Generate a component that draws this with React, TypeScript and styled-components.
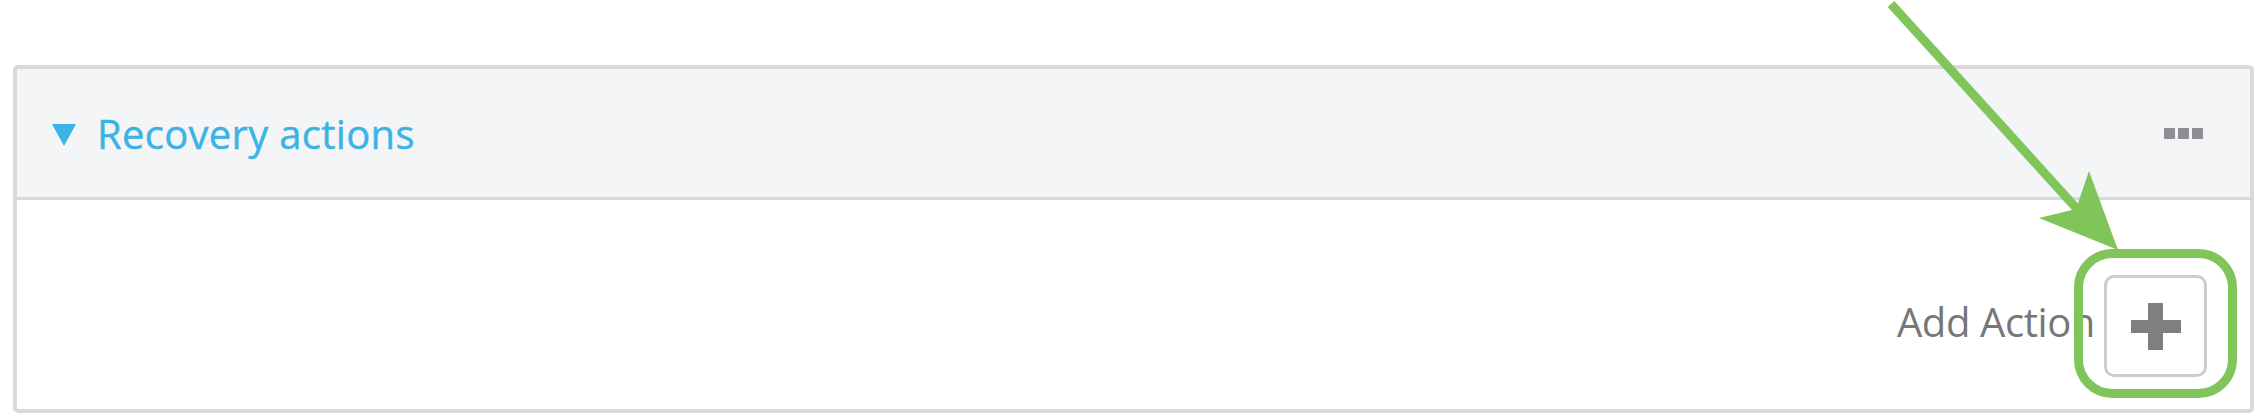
import styled, { createGlobalStyle } from "styled-components";

const GlobalStyle = createGlobalStyle`
  html, body {
    margin: 0;
    padding: 0;
    background: #ffffff;
  }
  body {
    font-family: "Open Sans", "Liberation Sans", sans-serif;
  }
`;

const Page = styled.div`
  position: relative;
  width: 2264px;
  height: 419px;
  padding: 65px 10px 0 13px;
  box-sizing: border-box;
  overflow: hidden;
`;

const Panel = styled.section`
  border: 4px solid #d9d9d9;
  border-radius: 5px;
  background: #ffffff;
  display: flex;
  flex-direction: column;
  height: 348px;
  box-sizing: border-box;
`;

const Header = styled.div`
  height: 128px;
  display: flex;
  align-items: center;
  padding: 0 47px 0 35px;
  background: #f4f5f7;
  border-bottom: 3px solid #d9d9d9;
`;

const Toggle = styled.svg`
  width: 24px;
  height: 22px;
  margin-right: 21px;
  margin-top: 4px;
  fill: #3bb3e6;
`;

const Title = styled.h2`
  margin: 0;
  font-size: 40px;
  font-weight: 500;
  color: #3bb3e6;
  letter-spacing: 0.3px;
  -webkit-text-stroke: 0.4px #3bb3e6;
`;

const MoreDots = styled.div`
  margin-left: auto;
  display: flex;
  gap: 3px;
  span {
    width: 11px;
    height: 11px;
    border-radius: 1px;
    background: #8e8e92;
  }
`;

const Body = styled.div`
  flex: 1;
  display: flex;
  justify-content: flex-end;
  align-items: flex-start;
  padding: 75px 43px 0 0;
`;

const ActionRow = styled.div`
  display: flex;
  align-items: center;
  gap: 9px;
`;

const ActionLabel = styled.span`
  font-size: 40px;
  font-weight: 500;
  color: #777777;
  letter-spacing: -0.4px;
  margin-top: -10px;
`;

const AddButton = styled.button`
  width: 103px;
  height: 102px;
  border: 3px solid #cccccc;
  border-radius: 10px;
  background: #ffffff;
  display: flex;
  align-items: center;
  justify-content: center;
  padding: 0;
  svg {
    width: 50px;
    height: 47px;
    fill: #7f7f7f;
  }
`;

const Callout = styled.svg`
  position: absolute;
  left: 0;
  top: 0;
  width: 2264px;
  height: 419px;
  pointer-events: none;
`;

const GREEN = "#80c55a";

export default function App() {
  return (
    <Page>
      <GlobalStyle />
      <Panel>
        <Header>
          <Toggle viewBox="0 0 24 22">
            <polygon points="0,0 24,0 12,22" />
          </Toggle>
          <Title>Recovery actions</Title>
          <MoreDots>
            <span />
            <span />
            <span />
          </MoreDots>
        </Header>
        <Body>
          <ActionRow>
            <ActionLabel>Add Action</ActionLabel>
            <AddButton aria-label="Add Action">
              <svg viewBox="0 0 50 47">
                <rect x="17" y="0" width="15" height="47" />
                <rect x="0" y="17" width="50" height="13" />
              </svg>
            </AddButton>
          </ActionRow>
        </Body>
      </Panel>
      <Callout viewBox="0 0 2264 419">
        <line x1="1891" y1="4" x2="2078" y2="210" stroke={GREEN} strokeWidth="9" />
        <polygon points="2118,250 2089,171 2076,209 2039,218" fill={GREEN} />
        <rect
          x="2078.5"
          y="253.5"
          width="154"
          height="140"
          rx="34"
          fill="none"
          stroke={GREEN}
          strokeWidth="9"
        />
      </Callout>
    </Page>
  );
}
